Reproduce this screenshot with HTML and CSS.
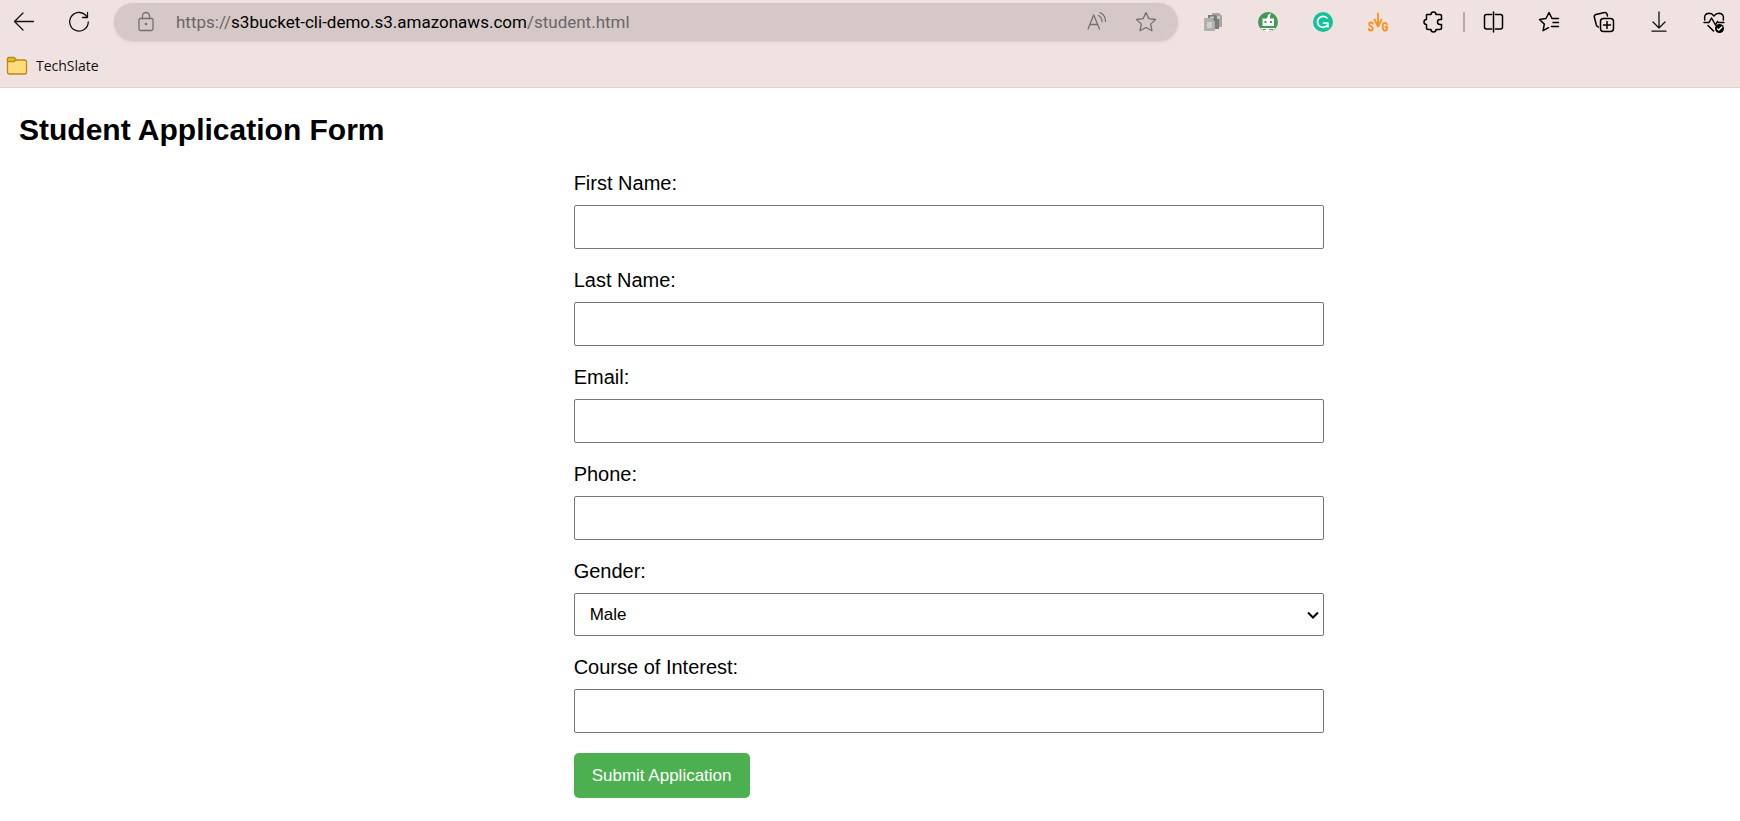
FILE: index.html
```html
<!DOCTYPE html>
<html lang="en">
<head>
<meta charset="utf-8">
<title>Student Application Form</title>
<link rel="stylesheet" href="styles.css">
</head>
<body>
<header class="browser">
  <div class="toolbar">
    <div class="nav">
      <button class="icon-button" type="button" aria-label="Back"><svg class="icon" viewBox="0 0 24 24"><path d="M21.5 11.5H2.5M11 3L2.5 11.5L11 20"/></svg></button>
      <button class="icon-button" type="button" aria-label="Refresh"><svg class="icon" viewBox="0 0 24 24"><path d="M20 7A9.3 9.3 0 1 0 21.3 12M20.5 2.5V7.5H15.5"/></svg></button>
    </div>
    <div class="address">
      <svg class="icon muted" viewBox="0 0 24 24"><rect x="5" y="8.5" width="14" height="12" rx="1.5"/><path d="M8.5 8.500V6a3.500 3.500 0 0 1 7 0v2.500"/><circle class="dot" cx="12" cy="14" r="1.300"/></svg>
      <p class="url">https://<span class="host">s3bucket-cli-demo.s3.amazonaws.com</span>/student.html</p>
      <button class="icon-button" type="button" aria-label="Read aloud"><svg class="icon muted" viewBox="0 0 24 24"><path d="M3 19L8.700 5L14.500 19M5 14.500h7.700M13.500 5.500q3.500 2 3.500 6M15 2.500q5.500 2.500 5.500 9"/></svg></button>
      <button class="icon-button" type="button" aria-label="Add to favorites"><svg class="icon muted" viewBox="0 0 24 24"><path d="M12 2.500l2.900 6.100 6.600.900-4.800 4.600 1.200 6.600-5.900-3.200-5.900 3.200 1.200-6.600-4.800-4.600 6.600-.900z"/></svg></button>
    </div>
    <div class="group">
      <button class="icon-button" type="button" aria-label="Copy extension"><svg class="icon" viewBox="0 0 24 24"><g stroke="none"><path fill="#a3a6a4" d="M11 3h7l3 3v11H11z"/><path fill="#777b79" d="M7 5h8l3 3v11H7z"/><path fill="#c6c8c7" d="M16 6h3v3h-3zM9 6.500h4v2H9z"/><path fill="#aeb1b0" d="M3 8h8l3 4v9H3z"/><path fill="#cfd1d0" d="M6 12h5v6H6z"/></g></svg></button>
      <button class="icon-button" type="button" aria-label="Robot extension"><svg class="icon" viewBox="0 0 24 24"><g stroke="none"><circle fill="#45985a" cx="12" cy="12" r="10"/><path fill="#fff" d="M6.500 8.500H11L12 5l3-2-1 3v2.500h4V16H6.500zM4.500 18h15q-7.500 8-15 0z"/><path fill="#45985a" d="M8.500 11h2v2h-2zM14 11h2v2h-2zM7 19h3v1H7zM13 19h4v1h-4z"/></g></svg></button>
      <button class="icon-button" type="button" aria-label="Writing assistant"><svg class="icon" viewBox="0 0 24 24"><circle stroke="none" fill="#15c39a" cx="12" cy="12" r="10"/><path stroke="#fff" stroke-width="1.700" d="M16 8A5.500 5.500 0 1 0 16.500 15M12.500 13h4.500v4"/></svg></button>
      <button class="icon-button" type="button" aria-label="SVG extension"><svg class="icon" viewBox="0 0 24 24"><path stroke="#f7931e" stroke-width="1.800" d="M6.800 13.500Q6.300 12.500 5 12.500C2.500 12.500 2.500 15.500 5 16.300C7.500 17.300 7.200 20.500 5 20.500Q3 20.500 2.700 19M8.500 9.500L12 16.500L15.500 9.500M12 3.500V15M21 14.500Q20.500 12.800 18.800 12.800Q16.800 12.800 16.800 15.200V18Q16.800 20.500 18.800 20.500Q21 20.500 21 18.500V17H19.500"/></svg></button>
      <button class="icon-button" type="button" aria-label="Extensions"><svg class="icon dark" viewBox="0 0 24 24"><path d="M6 4.500h4a2.500 2.500 0 0 1 5 0h3.500q2 0 2 1.500V9.500h-1.500a2.500 2.500 0 0 0 0 5h1.500V18q0 1.500-2 1.500H15a2.500 2.500 0 0 1-5 0H7.500q-2 0-2-1.500v-3.500a2.500 2.500 0 0 1 0-5V5z"/></svg></button>
    </div>
    <span class="separator"></span>
    <div class="group">
      <button class="icon-button" type="button" aria-label="Split screen"><svg class="icon dark" viewBox="0 0 24 24"><path d="M11.500 2v20M9.500 4.500H4.500q-2 0-2 2v10.500q0 2 2 2h5M13.500 4.500H18.500q2 0 2 2v10.500q0 2-2 2h-5"/></svg></button>
      <button class="icon-button" type="button" aria-label="Favorites"><svg class="icon dark" viewBox="0 0 24 24"><path d="M21.500 8.500H15L12 2.500 9 8.500l-6.500 1 4.800 4.600-1.200 6.600 5.400-3M16 12.500h5.500M14.500 16.500h7"/></svg></button>
      <button class="icon-button" type="button" aria-label="Collections"><svg class="icon dark" viewBox="0 0 24 24"><rect x="8.500" y="8.500" width="13" height="13" rx="3"/><path d="M15 11.500v7M11.500 15h7M15.500 6l-.500-2q-.800-1.800-2.500-1.400L4 4.400Q2 5 2.300 7l2 8q.500 1.600 2 2"/></svg></button>
      <button class="icon-button" type="button" aria-label="Downloads"><svg class="icon" viewBox="0 0 24 24"><path d="M12 2v16M6 12l6 6 6-6M5 21.200h14"/></svg></button>
      <button class="icon-button" type="button" aria-label="Browser essentials"><svg class="icon dark" viewBox="0 0 24 24"><path d="M2.800 10Q1.500 3.500 7 3.300q3 0 5 2.700 2-2.700 5-2.700Q22.500 3.500 21.300 10M2 12.500h5l2.500-4.500 4 7 2-3.500 1 1H22M6 15.500l5.500 5.500"/><circle class="dot-dark" cx="17.500" cy="18.500" r="4.500"/><path stroke="#fff" d="M15.500 19l1.300 1 3-3"/></svg></button>
    </div>
  </div>
  <nav class="bookmarks">
    <a class="bookmark" href="#"><svg class="folder" viewBox="0 0 22 20"><path d="M2.500 2h5L10 4h8.500q2 0 2 2v10q0 2-2 2h-15q-2 0-2-2V3.500Q1.500 2 2.500 2z" fill="#ffdc7c"/><path d="M1.500 5V3.500Q1.500 1.500 3 1.500h5l2 2-2 2H2.500z" fill="#f0bd22"/></svg>TechSlate</a>
  </nav>
</header>
<main class="page">
  <h2 class="title">Student Application Form</h2>
  <form class="form">
    <div class="field"><label for="first">First Name:</label><input class="control" id="first" type="text"></div>
    <div class="field"><label for="last">Last Name:</label><input class="control" id="last" type="text"></div>
    <div class="field"><label for="email">Email:</label><input class="control" id="email" type="email"></div>
    <div class="field"><label for="phone">Phone:</label><input class="control" id="phone" type="tel"></div>
    <div class="field"><label for="gender">Gender:</label>
      <div class="select-wrap"><select class="control select" id="gender"><option>Male</option><option>Female</option><option>Other</option></select><svg class="chevron" viewBox="0 0 12 8"><path d="M1 1.500l5 5 5-5"/></svg></div>
    </div>
    <div class="field"><label for="course">Course of Interest:</label><input class="control" id="course" type="text"></div>
    <button class="submit" type="submit">Submit Application</button>
  </form>
</main>
</body>
</html>
```
FILE: styles.css
```css
* { box-sizing: border-box; }

body {
  margin: 0;
  background: #fff;
  color: #000;
  font-family: "Liberation Sans", Arial, sans-serif;
  font-size: 20px;
}

.browser {
  padding: 3px 0 10px;
  background: #f0e2e1;
  border-bottom: 1px solid #e0d3d2;
  font-family: "Open Sans", "Noto Sans", sans-serif;
}

.toolbar {
  display: flex;
  align-items: center;
  padding: 0 14px 0 12px;
}

.nav, .group { display: flex; gap: 31px; }

.icon-button {
  display: block;
  padding: 0;
  border: 0;
  background: none;
}

.icon {
  display: block;
  flex: none;
  width: 24px;
  height: 24px;
  fill: none;
  stroke: #111;
  stroke-width: 1.3;
  stroke-linejoin: round;
  stroke-linecap: round;
}

.dark { stroke: #000; stroke-width: 1.5; }
.muted { stroke: #757070; }
.dot { fill: #757070; stroke: none; }
.dot-dark { fill: #000; stroke: none; }

.address {
  display: flex;
  flex: 1;
  align-items: center;
  gap: 25px;
  height: 38px;
  min-width: 0;
  margin: 0 23px;
  padding: 0 20px;
  border-radius: 19px;
  background: #d6c8c7;
  box-shadow: 0 1px 3px #d9cbca;
}

.url {
  flex: 1;
  min-width: 0;
  margin: 0 0 0 -7px;
  overflow: hidden;
  color: #6b6667;
  font-family: Roboto, "Open Sans", sans-serif;
  font-size: 17px;
  line-height: 24px;
  white-space: nowrap;
}

.host { color: #000; }

.separator {
  width: 2px;
  height: 20px;
  margin: 0 17px 0 18px;
  background: #b5aaaa;
}

.bookmarks { display: flex; padding: 14px 6px 0; }

.bookmark {
  display: flex;
  align-items: center;
  gap: 8px;
  color: #111;
  font-size: 14px;
  line-height: 22px;
  text-decoration: none;
}

.folder {
  width: 22px;
  height: 20px;
  stroke: #b58a16;
  stroke-width: 1.3;
}

.page { padding: 25px 19px; }

.title {
  margin: 0 0 25px;
  font-size: 30px;
  line-height: 34px;
}

.form {
  display: flex;
  flex-direction: column;
  align-items: flex-start;
  gap: 20px;
  width: 100%;
  max-width: 750px;
  margin-left: calc(33% - 7px);
}

.field {
  display: flex;
  flex-direction: column;
  gap: 10px;
  width: 100%;
  line-height: 23px;
}

.control {
  display: block;
  width: 100%;
  height: 44px;
  padding: 0 15px;
  border: 1px solid #767676;
  border-radius: 2px;
  background: #fff;
  color: #000;
  font-family: inherit;
  font-size: 17px;
}

.select-wrap { position: relative; }

.select { height: 43px; appearance: none; }

.chevron {
  position: absolute;
  top: 18px;
  right: 5px;
  width: 12px;
  height: 8px;
  fill: none;
  stroke: #000;
  stroke-width: 2;
  pointer-events: none;
}

.submit {
  height: 45px;
  padding: 0 18px;
  border: 0;
  border-radius: 5px;
  background: #4caf50;
  color: #fff;
  font-family: inherit;
  font-size: 17px;
}
```
